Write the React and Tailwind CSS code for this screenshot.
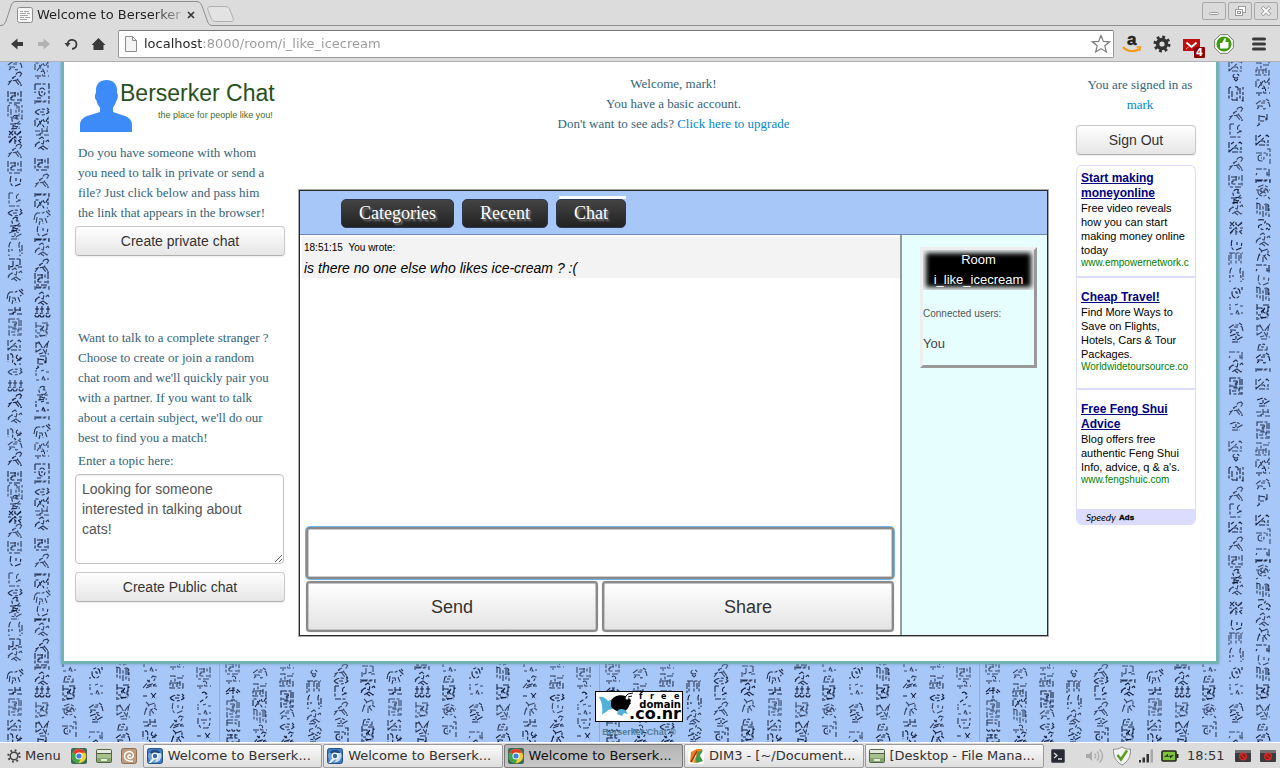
import React from "react";

const GLYPHS = {
  animal: "M-7-3L-5-5H1L4-7L6-5M-7-3L-8 2M-5-1L-6 6M-3 1L0 1L1 6M3 0L5 5M4-7L8-3L5-1M6-8L8-6M-2 3L-3 7",
  arms: "M-7-2H-2M0-2H6M-6 2H-1M2 2H7M0-5V2M5-5V-1M-3 2L-1 0",
  box: "M-6-8H6V8H-6ZM-3-5L1-5L2-2H-2V2H3V5H-4M4-7V7M0-4V4M-5 0H-3",
  tri: "M-7-5V5H6M-7 5L4-5L6-3M-3 1L1 1L3 4M-5-3L-2-5M5 0V3",
  n9: "M-7-6V2M-5-6C-1-7-2 0-3 5M3-5A2 2 0 1 0 5-2V5M2 1L7-2M-1 3L1 5",
  ring: "M-4 0A4 5 0 1 0 4 0A4 5 0 1 0-4 0M-1-1H1V1M-7 5H-5M6-6V-3",
  ankh: "M-7-3H-3M-2-3H2M4-3H8M-5-6V0M0-6V0M6-6V0M-7 3A2 2 0 1 0-3 3A2 2 0 1 0-7 3M-2 3A2 2 0 1 0 2 3A2 2 0 1 0-2 3M4 3A2 2 0 1 0 8 3A2 2 0 1 0 4 3",
  bird: "M-7 6L2-6L5-7L6-4L2 1L-4 2L-7 3M0 1L4 6H7M2 0L6 5V7M-3-1L1-3M5-7L7-5",
  bigbird: "M-6-6V6M-6-4L-3-6L1 1L6-6L7-7M6-6L4 4L-3 6M-1 1L-6 4M1 1L4 6H7M-4-6L-1-3M-2 8H4",
  boxbird: "M-6-8V8M-6-4H-1V3H-5M0-7H6V-4M2-3A2 2 0 1 0 4 0V5L-5 7M-2 0L2-4M5-6V6M-3 5L5 6",
  bar: "M-7 0H7M-7-2V2M7-2V2M-6-1H5",
  knot: "M-7 1L-3-2L1 0L6-4L7-2M-3-5L0-7L2-5L1 2L-4 5M1 2L5 5L7 3M-2 3L2 6M-5-1L-7 3",
  dash: "M-7 0H7M-1-4A2 2 0 1 1 0-1M-5 2H-3",
  wave: "M-7 4V-3H-3L-2 1L1-3L3 1L6-4V3M-5 5L-3 2H0L2 5H6",
  hook: "M-4-6C-6 0-4 5 0 4L5 2L6-4M1-4V-1",
  frame: "M-7-7H7V8M-7-7V2M-3 1A3 4 0 1 0 3 1A3 4 0 1 0-3 1M0 0V2M-5 7H-1",
  box2: "M-7-6V6H-3M-5-4H3V-1H-3V3H5M6-6V6M0-5V-1M-1 6H5M-4 0V3",
  chair: "M-6-7V6H5M-6-7H-2M4-6A3 3 0 1 0 5 0V4M5 0L1 2",
  lens: "M-7 0C-3-4 3-4 7 0C3 4-3 4-7 0M-2 0H2M5-4L7-2",
  fish: "M-7 0L-3-3H2L6-1L7 3M-6 2H-1L1 5L5 4M-2-1H2M3-5L6-3M-4 3L-6 5",
  spiral: "M3-6A4 4 0 1 0 4 0A2 2 0 1 0 0-2M-5 2H5L2 5L-3 3M-4 7L5 6M2-6V-3M-2 3V7",
  lattice: "M-6-6L6 6M6-6L-6 6M-6-2L-2-6L2-2L6-5M-6 5L-2 1L2 5L6 2M-7 0H-4M4 0H7M0-6V-3M0 3V7",
  pillars: "M-7-6V7M-4-3V6M-1-7A2 2 0 1 1 1-3V7M4-6V5L7 7V-7M-7-6L-5-7M-4 6H1",
  pi: "M-7-6H7M-5-6V7M0-6V5M5-6V7M-7-4V6M3-4V3",
  bracket: "M-4-7C-7-6-6 3-6 7M5-7C2-5 6 1 5 7M-3 0V2M7-4V5",
  o: "M-3-1A3 2 0 1 0 3-1A3 2 0 1 0-3-1M-2 2L0 4L2 2",
  dots: "M-6-3V0M-6 4H-3M-1-5L2-6M4-4H7M1 0L3 4H0L1 0M6 2V4M-7-5H-5",
  t: "M-7-3H6M6-3V5M4 0V3H7M-6 1L-7 3",
  arch: "M-6-7V6M-3-6V7M0 7V-3C0-7 6-7 6-3V7M3-5V7M-7-7L-3-6M5-5V3",
  hump: "M-6 3H6M-5 2L-4-2L1-3L4 0V3M-2 0H1",
  flag: "M-4-6V6M-4-5L3-4L3 0H-3M4-7V-1M-6 5L-3 3",
  tee: "M-6-5L6-5M5-5V1L-5 3M-6 1V6M-2-3V2M3 3H7",
  beetle: "M-5-5L0-7L5-5M-5 0A5 4 0 1 0 5 0A5 4 0 1 0-5 0M-5 6L-7 7M5 5L7 7M-3-1L3 1M-3 2L3-2M-7-2H7",
  circ: "M-5 1A3 3 0 1 0 1 1A3 3 0 1 0-5 1M4-8H7V7M-7-4H3M4-4V-1M-2 1H-1",
  palm: "M-7-1L-3-5L2-5L7-1M-4-2L1-3L5 0M0-5V7M-2 7H2M-7 1L-4 0",
  table: "M-6-3H6V4M-6-3V4M-6 0H3V3",
  ooo: "M-6-6A1.500 1.500 0 1 0-3-5M-1-6A1.500 1.500 0 1 0 2-5M4-6A1.500 1.500 0 1 0 7-5M-6 0H6M-6 3H6V7H-6ZM-2-1V3M2-1V3",
  feather: "M-7 6L3-6L6-5L2 2L-4 4M-4 6L6 2M0 0L-3-2M3 4H7",
  boxes: "M-7-6H-2V-1H-7M0-4H6V-7M-7 1H6V6H-7ZM-4 2V5M0 0V5M3-1V4",
  cup: "M-6-5V1L-3 5H4L6 0V-5M-3-3H3M-1 0H1",
  minusx: "M-7 0H-3M1-3L6 3M6-3L1 3",
  comma: "M-2-4A3 3 0 1 1 2 1L-4 5M1-3H3",
  kneel: "M-4-7L-1-4L-4 0L1 1L5 6M-1-4L5-6V-2L1 1M-4 0L-6 7M0 2V7M4-1L7 1",
  eye: "M-6-2L0-4L6-1L1 2L-5 1M-4 4H4M0-2V1",
  s: "M-5-5C5-7 4-1-3 0C-8 2 0 7 5 3M3-1A3 3 0 1 1 5 5",
};

const COLUMNS = [
  [[286, "tri"], [306, "box2"], [325, "bigbird"], [345, "lens"], [365, "palm"], [668, "box2"], [681, "dash"], [693, "palm"], [709, "box"], [723, "table"], [735, "ooo"]].slice(5),
  [[673, "fish"], [690, "boxes"], [702, "wave"], [716, "arch"], [730, "dash"], [738, "feather"]],
  [[668, "dash"], [680, "boxes"], [699, "box"], [714, "fish"], [727, "lens"], [738, "feather"]],
  [[673, "o"], [687, "pi"], [702, "bracket"], [717, "knot"], [729, "s"], [738, "eye"]],
  [[671, "bird"], [681, "lens"], [693, "chair"], [709, "bird"], [722, "eye"], [736, "circ"]],
  [[671, "tee"], [681, "bar"], [690, "knot"], [706, "kneel"], [722, "hump"], [734, "boxbird"]],
  [[65, "fish"], [79, "bird"], [97, "box2"], [112, "pillars"], [122, "spiral"], [137, "lattice"], [151, "bird"], [167, "box2"], [182, "hook"], [200, "chair"], [213, "lens"], [224, "spiral"], [235, "eye"], [249, "bracket"], [264, "tee"], [275, "knot"], [297, "animal"], [312, "arms"], [327, "box"], [345, "tri"], [360, "n9"], [372, "lens"], [386, "ankh"], [401, "bird"], [417, "knot"], [435, "n9"]],
  [[66, "wave"], [76, "dash"], [91, "frame"], [102, "bar"], [112, "lens"], [122, "wave"], [133, "arms"], [144, "knot"], [164, "box2"], [181, "bird"], [195, "bar"], [203, "wave"], [218, "animal"], [232, "hook"], [240, "bar"], [250, "knot"], [266, "bird"], [279, "box2"], [288, "bar"], [299, "knot"], [312, "ankh"], [330, "boxbird"], [348, "bigbird"], [364, "flag"], [376, "dots"], [393, "spiral"], [407, "dots"], [418, "bar"], [432, "animal"]],
  [[667, "dots"], [679, "hump"], [693, "boxbird"], [711, "beetle"], [730, "circ"]],
  [[66, "tri"], [77, "o"], [94, "pillars"], [114, "bird"], [131, "chair"], [147, "tri"], [164, "bird"], [181, "box2"], [196, "spiral"], [209, "knot"], [228, "lattice"], [246, "hook"], [259, "pi"], [275, "bracket"], [293, "ring"], [310, "dots"], [328, "fish"], [338, "eye"], [355, "t"], [367, "knot"], [386, "box"], [409, "bird"], [426, "eye"]],
  [[69, "boxes"], [83, "wave"], [93, "dash"], [104, "fish"], [121, "flag"], [140, "tri"], [157, "circ"], [172, "t"], [181, "bar"], [192, "beetle"], [210, "arch"], [225, "s"], [240, "knot"], [255, "kneel"], [268, "t"], [281, "hook"], [294, "arch"], [312, "boxbird"], [331, "bigbird"], [347, "hump"], [358, "fish"], [370, "bar"], [384, "tri"], [402, "eye"], [414, "arms"], [430, "box"]],
  [[667, "dots"], [682, "feather"], [696, "minusx"], [709, "kneel"], [724, "arms"], [737, "n9"]],
  [[667, "dash"], [682, "boxes"], [698, "lens"], [709, "hook"], [722, "feather"], [737, "kneel"]],
  [[673, "box2"], [686, "dash"], [697, "comma"], [710, "dots"], [723, "cup"], [736, "minusx"]],
];

function Papyrus() {
  return (
    <svg className="absolute inset-0 size-full" aria-hidden="true">
      <defs>
        <pattern id="papyrus" x="-161" y="-62" width="380" height="380" patternUnits="userSpaceOnUse">
          <path d="M0.500 0V380" stroke="#8fabdc" />
          <g fill="none" stroke="#06102a" strokeWidth="1.100" strokeDasharray="6 1.500 3 2.500">
            {COLUMNS.map((col, c) =>
              col.map(([y, name], i) => {
                const ty = y % 380;
                const tx = Math.round(14 + c * 27);
                return [ty, ty - 380, ty + 380]
                  .filter((v) => v > -12 && v < 392)
                  .map((v) => (
                    <path key={`${c}-${i}-${v}`} d={GLYPHS[name]} transform={`translate(${tx} ${v})`} opacity={0.7 + (i % 3) * 0.1} />
                  ));
              })
            )}
          </g>
        </pattern>
      </defs>
      <rect width="100%" height="100%" fill="url(#papyrus)" />
    </svg>
  );
}

function ChromeIcon() {
  return (
    <svg viewBox="0 0 16 16" className="size-4 shrink-0" aria-hidden="true">
      <rect width="16" height="16" rx="2" fill="#3a6a5c" />
      <circle cx="8" cy="8" r="7.200" fill="#f4cf2e" />
      <path d="M8 8L1.800 4.400A7.200 7.200 0 0 1 14.400 4.800H8Z" fill="#df3b2e" />
      <path d="M8 8L1.800 4.400A7.200 7.200 0 0 0 7.500 15.200L10.500 9Z" fill="#3fa648" />
      <circle cx="8" cy="8" r="3.500" fill="#fff" />
      <circle cx="8" cy="8" r="2.600" fill="#3d7fe0" />
    </svg>
  );
}

function ChromiumIcon() {
  return (
    <svg viewBox="0 0 16 16" className="size-4 shrink-0" aria-hidden="true">
      <rect x="0.500" y="0.500" width="15" height="15" rx="2" fill="#3f7cc4" stroke="#27538a" />
      <circle cx="8" cy="8" r="6.500" fill="#c4daf2" />
      <path d="M8 8L2.500 4.600A6.500 6.500 0 0 1 13.700 5H8Z" fill="#1c4c8f" />
      <path d="M8 8L2.500 4.600A6.500 6.500 0 0 0 7.500 14.500L10.500 9Z" fill="#6d9fdb" />
      <circle cx="8" cy="8" r="3.400" fill="#fff" />
      <circle cx="8" cy="8" r="2.200" fill="#33679f" />
      <path d="M1.500 15L6 9.500L8 11L4 15Z" fill="#e6eef8" />
    </svg>
  );
}

function DrawerIcon() {
  return (
    <svg viewBox="0 0 16 16" className="size-4 shrink-0" aria-hidden="true">
      <rect x="0.500" y="1.500" width="15" height="13" rx="1" fill="#86a56a" stroke="#56654a" />
      <rect x="1" y="2" width="14" height="3" fill="#e4e8e0" />
      <path d="M1 5.500H15" stroke="#4d5f3c" />
      <rect x="1" y="6" width="14" height="4" fill="#a8c08e" />
      <rect x="5" y="11" width="6" height="2" fill="#e6ecdf" />
    </svg>
  );
}

function PencilIcon() {
  return (
    <svg viewBox="0 0 16 16" className="size-4 shrink-0" aria-hidden="true">
      <rect width="16" height="16" rx="2" fill="#fff" />
      <path d="M3 4L9 1L14 1V4L9 7V15L2 14Z" fill="#ef7d1b" />
      <path d="M9 7C9 4 12 3 15 2C14 5 12 6 12 8L15 13L9 15C7 12 8 9 9 7Z" fill="#3d9b4b" />
      <path d="M3 14L9 3" stroke="#7a3510" strokeWidth="1.200" />
      <path d="M5 15L8 7" stroke="#fbd6a4" />
    </svg>
  );
}

function Mute() {
  return (
    <svg viewBox="0 0 16 14" className="h-3.5 w-4" aria-hidden="true">
      <rect y="1" width="16" height="12" rx="1" fill="#3b3b3d" />
      <rect y="1" width="16" height="3" fill="#6f6f72" />
      <circle cx="8" cy="7.500" r="3.400" fill="#8f1715" stroke="#d62f2b" strokeWidth="1.200" />
      <path d="M6 5.500L10 9.500" stroke="#d62f2b" strokeWidth="1.200" />
    </svg>
  );
}

function WindowButton({ label, children }) {
  return (
    <button type="button" aria-label={label} className="flex h-[18px] w-6 items-center justify-center rounded-xs border border-[#a8a8a8] bg-[#dadada]">
      <svg viewBox="0 0 14 12" className="h-3 w-3.5" fill="none">
        {children}
      </svg>
    </button>
  );
}

function TabStrip() {
  return (
    <div className="relative flex h-[26px] shrink-0 items-stretch bg-[#dcdcdc]">
      <svg className="absolute inset-0 size-full" aria-hidden="true">
        <path d="M0 25.500H1C4 25.500 5 23 6 21L11 6C12 3 13 1.500 16 1.500H196C199 1.500 201 3 202 6L207 20C208 23 209 25.500 212 25.500H4000" fill="none" stroke="#8e8e8e" />
        <path d="M211 6.500H225C228 6.500 229 8 230 10L233 18C234 20 233 21.500 231 21.500H216C213 21.500 212 20 211 18L208 10C207 8 208 6.500 211 6.500Z" fill="#e3e3e3" stroke="#b0b0b0" />
      </svg>
      <div className="relative flex w-[200px] items-center pt-1 pl-[17px]">
        <svg viewBox="0 0 16 16" className="size-4 shrink-0" aria-hidden="true">
          <rect x="0.500" y="0.500" width="15" height="15" rx="2" fill="#f6f6f6" stroke="#8b8b8b" />
          <path d="M3 4.500H6M7 4.500H12M3 6.500H9M10 6.500H13M3 8.500H11M3 10.500H7M8 10.500H13M3 12.500H10" stroke="#a4a4a4" />
        </svg>
        <span className="ml-1 w-36 overflow-hidden bg-[linear-gradient(90deg,#222_116px,#dcdcdc_156px)] bg-clip-text text-[13px] whitespace-nowrap text-transparent">Welcome to BerserkerC</span>
        <button type="button" aria-label="Close tab" className="ml-0.5 flex size-4 items-center justify-center">
          <svg viewBox="0 0 8 8" className="size-2" aria-hidden="true"><path d="M1 1L7 7M7 1L1 7" stroke="#333" strokeWidth="1.600" /></svg>
        </button>
      </div>
      <div className="relative ml-auto flex gap-0.5 pt-0.5 pr-0.5">
        <WindowButton label="Minimize"><rect x="2.500" y="7.500" width="9" height="2" rx="1" fill="#fff" stroke="#9a9a9a" /></WindowButton>
        <WindowButton label="Restore">
          <rect x="5.500" y="1.500" width="7" height="6" fill="#fff" stroke="#9a9a9a" />
          <rect x="2.500" y="4.500" width="7" height="6" fill="#fff" stroke="#9a9a9a" />
          <rect x="4.500" y="6.500" width="3" height="2" stroke="#9a9a9a" />
        </WindowButton>
        <WindowButton label="Close">
          <path d="M3 2L11 10M11 2L3 10" stroke="#9a9a9a" strokeWidth="3.600" />
          <path d="M3.500 2.500L10.500 9.500M10.500 2.500L3.500 9.500" stroke="#fff" strokeWidth="1.800" />
        </WindowButton>
      </div>
    </div>
  );
}

function Toolbar() {
  return (
    <div className="flex h-9 shrink-0 items-center border-b border-[#b0b0b0] bg-[#dcdcdc] pr-3.5 pl-2.5">
      <div className="flex items-center gap-3">
        <button type="button" aria-label="Back"><svg viewBox="0 0 15 14" className="h-3.5 w-[15px]"><path d="M1 7L7.500 1.500V5H13V9H7.500V12.500Z" fill="#3a3a3a" /></svg></button>
        <button type="button" aria-label="Forward"><svg viewBox="0 0 15 14" className="h-3.5 w-[15px]"><path d="M13 7L6.500 1.500V5H1V9H6.500V12.500Z" fill="#b2b2b2" /></svg></button>
        <button type="button" aria-label="Reload"><svg viewBox="0 0 15 14" className="h-3.5 w-[15px]"><path d="M3.500 7A4.500 4.500 0 1 1 8 11.800" fill="none" stroke="#3a3a3a" strokeWidth="1.800" /><path d="M0.500 6H6.500L3.500 10Z" fill="#3a3a3a" /></svg></button>
        <button type="button" aria-label="Home"><svg viewBox="0 0 15 14" className="h-3.5 w-[15px]"><path d="M7.500 1L14.500 8H12.500V13H2.500V8H0.500Z" fill="#3a3a3a" /></svg></button>
      </div>
      <div className="ml-3 flex h-7 flex-1 items-center rounded-xs border border-[#9a9a9a] border-t-[#777] bg-white pr-0.5 pl-1.5">
        <svg viewBox="0 0 12 16" className="h-4 w-3" aria-hidden="true"><path d="M0.500 0.500H7.500L11.500 4.500V15.500H0.500Z" fill="#f4f4f4" stroke="#8d8d8d" /><path d="M7.500 0.500V4.500H11.500" fill="none" stroke="#8d8d8d" /></svg>
        <input aria-label="Address" defaultValue="localhost:8000/room/i_like_icecream" className="ml-[7px] min-w-0 flex-1 bg-[linear-gradient(90deg,#222_59px,#999_59px)] bg-clip-text text-[13px] text-transparent outline-none" />
        <button type="button" aria-label="Bookmark"><svg viewBox="0 0 20 20" className="size-5"><path d="M10 1.500L12.400 7.400L18.600 7.800L13.800 11.800L15.400 18L10 14.600L4.600 18L6.200 11.800L1.400 7.800L7.600 7.400Z" fill="#fff" stroke="#7c7c7c" strokeWidth="1.200" /></svg></button>
      </div>
      <div className="ml-2 flex items-center gap-2.5">
        <button type="button" aria-label="Amazon">
          <svg viewBox="0 0 20 20" className="size-5 overflow-visible">
            <text x="5" y="11" fontFamily="Liberation Sans, sans-serif" fontSize="17" fontWeight="700" fill="#222" stroke="#222" strokeWidth="0.500">a</text>
            <path d="M1 13C5 18 13 18 17 15" fill="none" stroke="#f39a1d" strokeWidth="2.200" />
            <path d="M14.500 13L18.500 13L17.500 17" fill="none" stroke="#f39a1d" strokeWidth="1.600" />
          </svg>
        </button>
        <button type="button" aria-label="Settings">
          <svg viewBox="0 0 20 20" className="size-5">
            <circle cx="10" cy="10" r="4.400" fill="none" stroke="#333" strokeWidth="3.600" />
            <circle cx="10" cy="10" r="7" fill="none" stroke="#333" strokeWidth="3" strokeDasharray="2.750 2.750" />
          </svg>
        </button>
        <button type="button" aria-label="Mail, 4 unread" className="mt-2">
          <svg viewBox="0 0 24 20" className="h-5 w-6">
            <rect x="1" y="1" width="17" height="12" fill="#c00d0d" />
            <path d="M4.500 4.500L9.500 9L14.500 4.500" fill="none" stroke="#fff" strokeWidth="2" />
            <path d="M4 11L6.500 9M15 11L12.500 9" stroke="#e9a0a0" />
            <rect x="12" y="9" width="11" height="11" rx="1" fill="#8e0000" />
            <text x="17.500" y="18" textAnchor="middle" fontFamily="DejaVu Sans, sans-serif" fontSize="10" fontWeight="700" fill="#fff">4</text>
          </svg>
        </button>
        <button type="button" aria-label="Web of Trust" className="-ml-0.5">
          <svg viewBox="0 0 20 20" className="size-5">
            <path d="M6.200 0.700H13.800L19.300 6.200V13.800L13.800 19.300H6.200L0.700 13.800V6.200Z" fill="#fff" stroke="#6f7d66" />
            <circle cx="10" cy="10" r="7.600" fill="#3f9a0e" />
            <path d="M6 9H8L10.500 4.500H12L11.500 8H14.500V13.500L13 14.500H6Z" fill="#fff" />
          </svg>
        </button>
        <button type="button" aria-label="Menu" className="ml-2"><svg viewBox="0 0 14 14" className="size-3.5"><path d="M1.500 2H12.500M1.500 7H12.500M1.500 12H12.500" stroke="#3a3a3a" strokeWidth="3" strokeLinecap="round" /></svg></button>
      </div>
    </div>
  );
}

const softButton =
  "block h-[30px] w-full rounded-sm border border-[#c9c9c9] border-b-[#b0b0b0] bg-linear-to-b from-white to-[#e6e6e6] text-center text-sm leading-5 text-[#333] shadow-[0_1px_2px_rgba(0,0,0,0.08)]";

function LeftColumn() {
  return (
    <aside className="w-[210px] shrink-0 pt-[17px]">
      <header className="flex h-[55px] pl-[5px]">
        <svg viewBox="0 0 52 53" className="h-[53px] w-[52px] shrink-0" aria-hidden="true">
          <path d="M26.500 1C33 1 37 5 37 11V14C38.500 15 38 20 36.500 21.500C35.500 25 34 27 33 28.500V33L45 37C50 39 52 42 52 46V53H0V46C0 42 2 39 7 37L20 33V28.500C18.500 27 17 25 16.500 21.500C14.500 20 14.500 15 16 14V11C16 5 20 1 26.500 1Z" fill="#3d8bf8" />
        </svg>
        <div className="-ml-3 text-right font-['Liberation_Sans',sans-serif] whitespace-nowrap">
          <h1 className="text-[23px] leading-7 text-[#27501c]">Berserker Chat</h1>
          <p className="mt-0.5 pr-0.5 text-[9px] leading-3 text-[#3f6b2f]">the place for people like you!</p>
        </div>
      </header>
      <p className="mt-[9px] pl-[3px]">
        Do you have someone with whom<br />you need to talk in private or send a<br />file? Just click below and pass him<br />the link that appears in the browser!
      </p>
      <button type="button" className={`${softButton} mt-[3px] font-['Liberation_Sans',sans-serif]`}>Create private chat</button>
      <p className="mt-[72px] pl-[3px]">
        Want to talk to a complete stranger ?<br />Choose to create or join a random<br />chat room and we'll quickly pair you<br />with a partner. If you want to talk<br />about a certain subject, we'll do our<br />best to find you a match!
      </p>
      <label htmlFor="topic" className="mt-[3px] block pl-[3px]">Enter a topic here:</label>
      <textarea id="topic" defaultValue="Looking for someone interested in talking about cats!" className="mt-[3px] block h-[90px] w-[209px] rounded-sm border border-[#c4c4c4] bg-white py-1 pr-5 pl-1.5 font-['Liberation_Sans',sans-serif] text-sm leading-5 text-[#555] shadow-[inset_0_1px_1px_rgba(0,0,0,0.08)] outline-none" />
      <button type="button" className={`${softButton} mt-2 font-['Liberation_Sans',sans-serif]`}>Create Public chat</button>
    </aside>
  );
}

const navButton =
  "h-[29px] rounded-[5px] border border-[#2c3850] bg-linear-to-b from-[#444] to-[#222] px-[17px] text-lg leading-[27px] text-white [text-shadow:2px_2px_2px_#888]";
const bigButton =
  "h-[51px] rounded-sm border-2 border-[#8a8a8a] bg-linear-to-b from-white to-[#e4e4e4] text-center text-lg leading-6 text-[#333] shadow-[inset_0_0_0_1px_#c4c4c4,0_0_1px_#888]";

function ChatPanel() {
  return (
    <section className="mt-14 flex h-[446px] flex-col border border-[#2a2a2a] bg-white font-['Liberation_Sans',sans-serif] shadow-[0_0_0_1px_#aaa]">
      <nav className="flex h-11 shrink-0 gap-2 border-b border-[#6d88bb] bg-[#a8c7f9] pt-2 pl-[41px] font-['Liberation_Serif',serif]">
        <button type="button" className={navButton}>Categories</button>
        <button type="button" className={navButton}>Recent</button>
        <div className="relative">
          <div className="absolute -top-[3px] right-0 left-[3px] h-[3px] bg-white" />
          <button type="button" aria-current="page" className={navButton}>Chat</button>
        </div>
      </nav>
      <div className="flex min-h-0 flex-1">
        <div className="flex min-w-0 flex-1 flex-col border-r-2 border-[#999] pt-0.5 pb-[3px]">
          <article className="ml-0.5 h-[41px] bg-[#f3f3f3] pl-0.5 text-black">
            <header className="text-[10px] leading-[21px]"><time>18:51:15</time>{" "}&nbsp;You wrote:</header>
            <p className="text-sm leading-5 italic">is there no one else who likes ice-cream ? :(</p>
          </article>
          <div className="flex-1" />
          <div className="px-1.5">
            <textarea aria-label="Message" className="block h-[52px] w-full resize-none rounded-sm border-2 border-[#8a8a8a] bg-white p-2 shadow-[0_0_0_1px_#6fb4ea,inset_0_0_0_1px_#ccc] outline-none" />
            <div className="mt-0.5 grid grid-cols-2 gap-1">
              <button type="button" className={bigButton}>Send</button>
              <button type="button" className={bigButton}>Share</button>
            </div>
          </div>
        </div>
        <div className="w-[145px] shrink-0 bg-[#e6fefe] pt-3 pr-2.5 pl-[18px] text-[13px] leading-5 text-[#444]">
          <div className="h-[121px] border-3 border-t-[#eee] border-r-[#999] border-b-[#999] border-l-[#eee]">
            <h2 className="bg-black text-center text-white shadow-[inset_0_0_5px_3px_#e6eeee]">Room<br />i_like_icecream</h2>
            <p className="mt-3.5 text-[10px] text-[#555]">Connected users:</p>
            <ul className="mt-2.5"><li>You</li></ul>
          </div>
        </div>
      </div>
    </section>
  );
}

const adTitle = "block text-xs leading-[15px] font-bold text-[#000080] underline";

function Ad({ title, url, className, children }) {
  return (
    <article className={`px-1 ${className}`}>
      <a href="#ad" className={adTitle}>{title}</a>
      <p className="text-[11px] leading-[14px] whitespace-nowrap text-black">{children}</p>
      <a href="#ad" className="block overflow-hidden text-[10px] leading-3 whitespace-nowrap text-[#008000]">{url}</a>
    </article>
  );
}

function RightColumn() {
  return (
    <aside className="w-[120px] shrink-0 pt-[13px]">
      <p className="pl-2 text-center whitespace-nowrap">You are signed in as<br /><a href="#mark" className="text-[#0088cc]">mark</a></p>
      <button type="button" className={`${softButton} mt-2.5 font-['Liberation_Sans',sans-serif]`}>Sign Out</button>
      <div className="mt-2.5 overflow-hidden rounded-md border-x border-t border-[#dcdcff] font-['Liberation_Sans',sans-serif]">
        <Ad title={<>Start making<br />moneyonline</>} url="www.empowernetwork.c" className="h-[110px] pt-[5px]">
          Free video reveals<br />how you can start<br />making money online<br />today
        </Ad>
        <Ad title="Cheap Travel!" url="Worldwidetoursource.co" className="h-28 border-t-2 border-[#dcdcff] pt-3">
          Find More Ways to<br />Save on Flights,<br />Hotels, Cars &amp; Tour<br />Packages.
        </Ad>
        <Ad title={<>Free Feng Shui<br />Advice</>} url="www.fengshuic.com" className="h-[121px] border-t-2 border-[#dcdcff] pt-3">
          Blog offers free<br />authentic Feng Shui<br />Info, advice, q &amp; a's.
        </Ad>
        <a href="#speedy" className="block h-4 bg-[#dcdcff]">
          <svg viewBox="0 0 60 16" className="ml-[9px] h-4 w-[60px]" aria-label="SpeedyAds">
            <text x="0" y="12" fontFamily="Lato, sans-serif" fontStyle="italic" fontSize="10" fill="#000">Speedy</text>
            <text x="33" y="11" fontFamily="Liberation Sans, sans-serif" fontWeight="700" fontSize="8" stroke="#000" strokeWidth="0.300">Ads</text>
          </svg>
        </a>
      </div>
    </aside>
  );
}

function PageFooter() {
  return (
    <footer className="relative flex flex-col items-center pt-[27px] pr-0.5 font-['Liberation_Sans',sans-serif]">
      <a href="#domain" aria-label="free domain .co.nr">
        <svg viewBox="0 0 88 31" className="h-[31px] w-[88px]">
          <rect x="0.500" y="0.500" width="87" height="30" fill="#fff" stroke="#000" />
          <path d="M4 6C7 5 11 7 13 10L18 8V18L13 19C11 22 8 22 7 24C8 17 7 11 4 6Z" fill="#52b0d9" />
          <path d="M16 10C19 3 30 2 36 9C35 14 33 18 30 20C24 22 18 19 16 15Z" fill="#000" />
          <path d="M23 19C26 17 30 18 31 20L33 23L29 22L27 25L22 23Z" fill="#52b0d9" />
          <path d="M29 7L33 3L38 2M33 6L37 5M34 13L36 12" stroke="#000" fill="none" />
          <circle cx="32" cy="7" r="1.500" fill="#fff" />
          <g fontFamily="DejaVu Sans, sans-serif" fontWeight="700" fill="#000">
            <text x="44" y="8" fontSize="8">f</text>
            <text x="55" y="8" fontSize="8">r</text>
            <text x="66" y="8" fontSize="8">e</text>
            <text x="79" y="8" fontSize="8">e</text>
            <text x="86" y="17" fontSize="10" textAnchor="end">domain</text>
            <text x="86" y="28" fontSize="16" textAnchor="end">.co.nr</text>
          </g>
        </svg>
      </a>
      <p className="mt-1 text-[9px] leading-3 font-bold text-[#527d94]">Berserker Chat ®</p>
    </footer>
  );
}

function Task({ icon, active, children }) {
  return (
    <button
      type="button"
      className={`flex h-6 min-w-0 items-center gap-[5px] rounded-xs border px-[3px] ${active ? "border-[#777] bg-linear-to-b from-[#b4b4b4] to-[#c8c8c8] text-[#111]" : "border-[#9a9a9a] bg-linear-to-b from-[#fafafa] to-[#dedede] text-[#333]"}`}
    >
      {icon}
      <span className="whitespace-nowrap">{children}</span>
    </button>
  );
}

function Taskbar() {
  return (
    <div className="flex h-[26px] shrink-0 items-center border-t border-white bg-[#dcdcdc] pr-1 pl-[7px] text-[13px] text-[#333]">
      <button type="button" className="flex items-center gap-1">
        <svg viewBox="0 0 14 14" className="size-3.5" aria-hidden="true">
          <circle cx="7" cy="7" r="3.800" fill="none" stroke="#444" strokeWidth="1.600" />
          <circle cx="7" cy="7" r="5.700" fill="none" stroke="#444" strokeWidth="2" strokeDasharray="1.800 2.677" />
        </svg>
        Menu
      </button>
      <div className="ml-2.5 flex w-[66px] shrink-0 items-center justify-between">
        <button type="button" aria-label="Chrome"><ChromeIcon /></button>
        <button type="button" aria-label="Files"><DrawerIcon /></button>
        <button type="button" aria-label="Shell">
          <svg viewBox="0 0 16 16" className="size-4">
            <rect x="0.500" y="0.500" width="15" height="15" rx="2" fill="#bf9b7d" stroke="#8e6f55" />
            <path d="M12 13C6 14 3 11 3.500 7.500C4 4 8 2.500 11 4.500C13.500 6.500 12.500 10 9.500 10.500C7 10.500 6 8.500 7.500 7.200C8.500 6.500 9.800 7.200 9.300 8.300" fill="none" stroke="#fff" strokeWidth="1.500" />
          </svg>
        </button>
      </div>
      <div className="ml-1.5 grid flex-1 grid-cols-5 gap-px">
        <Task icon={<ChromiumIcon />}>Welcome to Berserk...</Task>
        <Task icon={<ChromiumIcon />}>Welcome to Berserk...</Task>
        <Task active icon={<ChromeIcon />}>Welcome to Berserk...</Task>
        <Task icon={<PencilIcon />}>DIM3 - [~/Document...</Task>
        <Task icon={<DrawerIcon />}>[Desktop - File Mana...</Task>
      </div>
      <div className="ml-[7px] flex w-[225px] shrink-0 items-center">
        <svg viewBox="0 0 14 14" className="size-3.5" aria-hidden="true"><rect x="0.500" y="0.500" width="13" height="13" rx="1" fill="#272a33" stroke="#55585f" /><path d="M3 4L6 6.500L3 9M7 10H11" stroke="#ddd" fill="none" strokeWidth="1.300" /></svg>
        <svg viewBox="0 0 20 16" className="ml-5 h-4 w-5" aria-hidden="true"><path d="M1 6H4L7 3V13L4 10H1Z" fill="#a9a9a9" /><path d="M9.500 5.500C11 7 11 9 9.500 10.500M12 3.500C14.500 6 14.500 10 12 12.500M14.500 1.500C18.500 5 18.500 11 14.500 14.500" fill="none" stroke="#b2b2b2" strokeWidth="1.500" /></svg>
        <svg viewBox="0 0 20 20" className="ml-[7px] size-5" aria-hidden="true"><path d="M10 1C13 3 16 3.500 18.500 3C19 10 16 16 10 19C4 16 1 10 1.500 3C4 3.500 7 3 10 1Z" fill="#f3f3f3" stroke="#8f8f8f" /><path d="M5.500 9L9 13.500L15 4.500" fill="none" stroke="#5e9d22" strokeWidth="2.600" /></svg>
        <svg viewBox="0 0 16 14" className="ml-1.5 h-3.5 w-4" aria-hidden="true"><path d="M1 11H3V13.500H1ZM4.500 8.500H7V13.500H4.500ZM8.500 5H11V13.500H8.500Z" fill="#333" /><path d="M12.500 0.500H15V13.500H12.500Z" fill="#a8a8a8" /></svg>
        <svg viewBox="0 0 18 14" className="ml-[7px] h-3.5 w-[18px]" aria-hidden="true"><rect x="1" y="2" width="14" height="10" rx="1" fill="#7fc23c" stroke="#222" strokeWidth="1.600" /><rect x="15.500" y="5" width="2" height="4" fill="#222" /><path d="M3 8L7 5V7L13 6L9 9.500V7.500Z" fill="#1d2a10" /></svg>
        <time className="ml-2 w-9">18:51</time>
        <div className="ml-auto flex gap-[9px]"><Mute /><Mute /></div>
      </div>
    </div>
  );
}

export default function App() {
  return (
    <div className="flex min-h-screen flex-col overflow-hidden bg-[#dcdcdc] font-['DejaVu_Sans',sans-serif]">
      <TabStrip />
      <Toolbar />
      <main className="relative flex-1 overflow-hidden bg-[#a8c7f9] font-['Liberation_Serif',serif] text-[13px] leading-5 text-[#34637a]">
        <Papyrus />
        <div className="relative mx-auto box-content flex w-[90%] border-x-3 border-b-3 border-[#72b3b3] bg-white pb-[25px] shadow-[0_0_3px_#6fa3c0]">
          <div className="flex w-full pr-5 pl-[11px]">
            <LeftColumn />
            <div className="mr-7 ml-3.5 min-w-0 flex-1 pt-3">
              <p className="text-center">
                Welcome, mark!<br />You have a basic account.<br />Don't want to see ads? <a href="#upgrade" className="text-[#0088cc]">Click here to upgrade</a>
              </p>
              <ChatPanel />
            </div>
            <RightColumn />
          </div>
        </div>
        <PageFooter />
      </main>
      <Taskbar />
    </div>
  );
}
